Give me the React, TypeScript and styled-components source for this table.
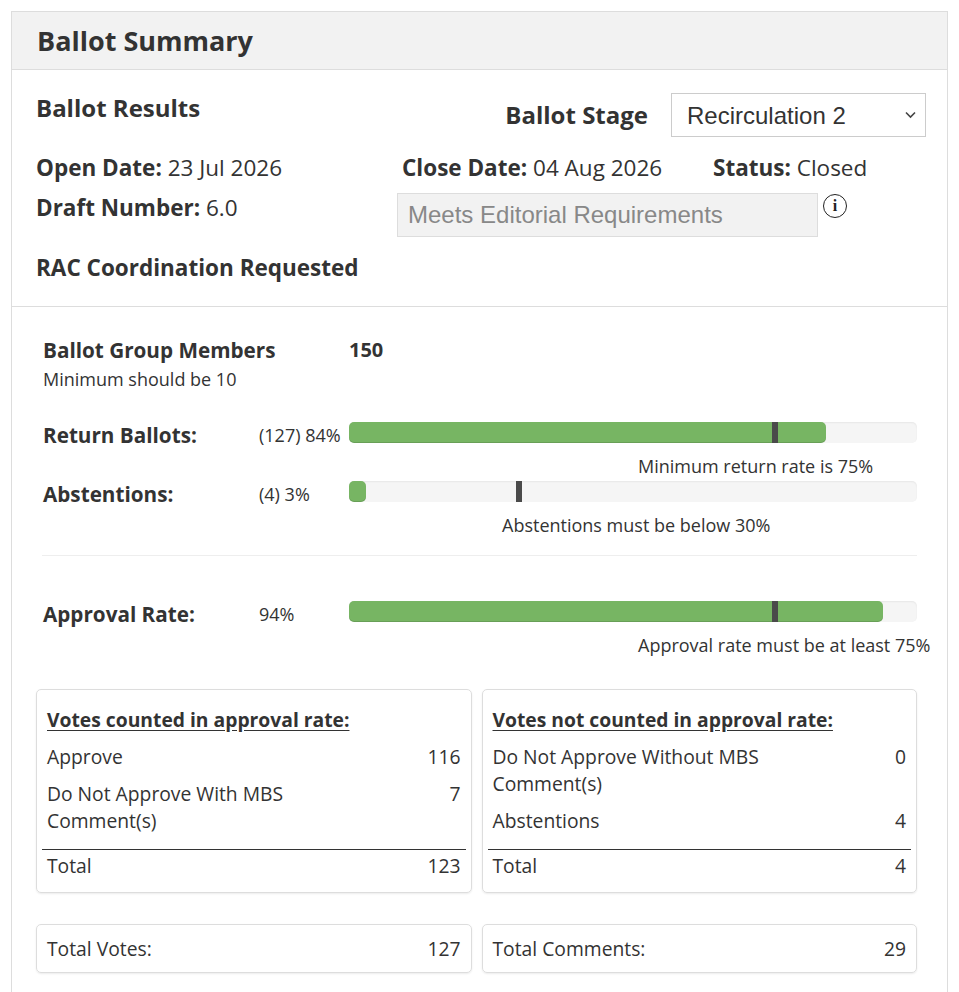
import React from 'react';
import styled, { createGlobalStyle } from 'styled-components';

const GlobalStyle = createGlobalStyle`
  * { box-sizing: border-box; }
  body {
    margin: 0;
    background: #fff;
    font-family: 'Open Sans', 'Noto Sans', sans-serif;
    color: #333;
  }
`;

const Page = styled.div`
  padding: 11px 0 0 11px;
`;

const Panel = styled.div`
  width: 937px;
  border: 1px solid #ddd;
  border-bottom: none;
  background: #fff;
`;

const PanelHeader = styled.div`
  height: 58px;
  background: #f2f2f2;
  border-bottom: 1px solid #ddd;
  display: flex;
  align-items: center;
  padding: 0 0 1px 25px;
`;

const PanelTitle = styled.h2`
  margin: 0;
  font-size: 27px;
  font-weight: 700;
  color: #333;
`;

const ResultsSection = styled.div`
  padding: 23px 21px 24px 24px;
  border-bottom: 1px solid #ddd;
`;

const TopRow = styled.div`
  display: flex;
  justify-content: space-between;
  align-items: flex-start;
`;

const SectionTitle = styled.h3`
  margin: 0;
  font-size: 24px;
  line-height: 30px;
  font-weight: 700;
`;

const StageGroup = styled.div`
  display: flex;
  align-items: center;
  gap: 23px;
`;

const StageLabel = styled.label`
  font-size: 24px;
  font-weight: 700;
  line-height: 30px;
`;

const SelectWrap = styled.div`
  position: relative;
  width: 255px;
  height: 44px;
`;

const Select = styled.select`
  appearance: none;
  width: 100%;
  height: 100%;
  border: 1px solid #ccc;
  border-radius: 0;
  background: #fff;
  padding: 0 30px 0 15px;
  font-family: 'Liberation Sans', Arial, sans-serif;
  font-size: 24px;
  color: #333;
`;

const Chevron = styled.svg`
  position: absolute;
  right: 10px;
  top: 18px;
  pointer-events: none;
`;

const InfoGrid = styled.div<{ $cols: string; $top: number }>`
  display: grid;
  grid-template-columns: ${(p) => p.$cols};
  align-items: start;
  margin-top: ${(p) => p.$top}px;
`;

const Field = styled.div<{ $top?: number }>`
  font-size: 22.5px;
  line-height: 28px;
  margin-top: ${(p) => p.$top ?? 0}px;
  white-space: nowrap;
`;

const FieldLabel = styled.strong`
  font-weight: 700;
`;

const EditorialGroup = styled.div`
  display: flex;
  align-items: flex-start;
  gap: 5px;
`;

const ReadOnlyInput = styled.div`
  width: 421px;
  height: 44px;
  background: #f2f2f2;
  border: 1px solid #ddd;
  padding: 0 10px;
  display: flex;
  align-items: center;
  font-family: 'Liberation Sans', Arial, sans-serif;
  font-size: 24px;
  color: #888;
`;

const InfoIcon = styled.span`
  width: 24px;
  height: 24px;
  margin-top: 1px;
  border: 1.5px solid #222;
  border-radius: 50%;
  display: flex;
  align-items: center;
  justify-content: center;
  font-family: 'Liberation Serif', 'DejaVu Serif', serif;
  font-weight: 700;
  font-size: 16px;
  color: #222;
`;

const StatsSection = styled.div`
  padding: 29px 30px 19px 24px;
`;

const Metrics = styled.div`
  margin-left: 7px;
`;

const MetricGrid = styled.div<{ $top?: number }>`
  display: grid;
  grid-template-columns: 216px 90px minmax(0, 1fr);
  align-items: center;
  margin-top: ${(p) => p.$top ?? 0}px;
`;

const GroupLabel = styled.div`
  grid-column: 1 / 3;
  font-size: 20.7px;
  font-weight: 700;
  line-height: 28px;
`;

const GroupValue = styled.div`
  font-size: 20px;
  font-weight: 700;
  line-height: 28px;
`;

const Hint = styled.div`
  font-size: 18px;
  line-height: 24px;
  margin-top: 3px;
`;

const MetricLabel = styled.div`
  font-size: 20.7px;
  font-weight: 700;
  line-height: 28px;
  position: relative;
  top: 2px;
`;

const MetricValue = styled.div`
  font-size: 18px;
  line-height: 28px;
  position: relative;
  top: 2px;
`;

const Track = styled.div`
  position: relative;
  height: 21px;
  background: #f5f5f5;
  border-radius: 5px;
  box-shadow: inset 0 1px 2px rgba(0, 0, 0, 0.06);
`;

const Fill = styled.div`
  height: 100%;
  background: #77b563;
  border-radius: 5px;
  box-shadow: inset 0 -1px 0 rgba(0, 0, 0, 0.12);
`;

const Marker = styled.div`
  position: absolute;
  top: 0;
  width: 6px;
  height: 100%;
  margin-left: -3px;
  background: #4a4a4a;
`;

const Caption = styled.div<{ $offset: number }>`
  grid-column: 3;
  margin: 7.5px 0 0 ${(p) => p.$offset}px;
  font-size: 18px;
  line-height: 24px;
  white-space: nowrap;
`;

const Divider = styled.hr`
  margin: 18px 0 0 -1px;
  border: none;
  border-top: 1px solid #eee;
`;

const CardGrid = styled.div<{ $top: number }>`
  display: grid;
  grid-template-columns: 1fr 1fr;
  gap: 10px;
  margin-top: ${(p) => p.$top}px;
`;

const Card = styled.div<{ $pad: string }>`
  border: 1px solid #ddd;
  border-radius: 5px;
  box-shadow: 0 1px 2px rgba(0, 0, 0, 0.08);
  padding: ${(p) => p.$pad};
`;

const CardHeading = styled.div`
  font-size: 19.3px;
  font-weight: 700;
  line-height: 26px;
  text-decoration: underline;
  text-underline-offset: 3px;
  margin-bottom: 3.5px;
`;

const VoteRow = styled.div<{ $line?: boolean; $first?: boolean }>`
  display: flex;
  justify-content: space-between;
  gap: 24px;
  font-size: 19.3px;
  line-height: 27px;
  margin-top: ${(p) => (p.$first ? 0 : 10)}px;
  ${(p) =>
    p.$line &&
    `
    margin: 15px -5px 0;
    padding: 2px 5px 0;
    border-top: 1.5px solid #333;
  `}
`;

const VoteName = styled.span`
  max-width: 290px;
`;

interface Bar {
  label: string;
  value: string;
  pct: number;
  marker: number;
  caption: string;
  offset: number;
}

const bars: Bar[] = [
  { label: 'Return Ballots:', value: '(127) 84%', pct: 84, marker: 75, caption: 'Minimum return rate is 75%', offset: 289 },
  { label: 'Abstentions:', value: '(4) 3%', pct: 3, marker: 30, caption: 'Abstentions must be below 30%', offset: 153 },
];

const approval: Bar = {
  label: 'Approval Rate:',
  value: '94%',
  pct: 94,
  marker: 75,
  caption: 'Approval rate must be at least 75%',
  offset: 289,
};

const MetricRow: React.FC<{ bar: Bar; top: number }> = ({ bar, top }) => (
  <MetricGrid $top={top}>
    <MetricLabel>{bar.label}</MetricLabel>
    <MetricValue>{bar.value}</MetricValue>
    <Track>
      <Fill style={{ width: `${bar.pct}%` }} />
      <Marker style={{ left: `${bar.marker}%` }} />
    </Track>
    <Caption $offset={bar.offset}>{bar.caption}</Caption>
  </MetricGrid>
);

const counted = [
  ['Approve', '116'],
  ['Do Not Approve With MBS Comment(s)', '7'],
];

const notCounted = [
  ['Do Not Approve Without MBS Comment(s)', '0'],
  ['Abstentions', '4'],
];

const VoteCard: React.FC<{ title: string; rows: string[][]; total: string }> = ({ title, rows, total }) => (
  <Card $pad="17px 10px 13px">
    <CardHeading>{title}</CardHeading>
    {rows.map(([name, count]) => (
      <VoteRow key={name}>
        <VoteName>{name}</VoteName>
        <span>{count}</span>
      </VoteRow>
    ))}
    <VoteRow $line>
      <span>Total</span>
      <span>{total}</span>
    </VoteRow>
  </Card>
);

export default function App() {
  return (
    <Page>
      <GlobalStyle />
      <Panel>
        <PanelHeader>
          <PanelTitle>Ballot Summary</PanelTitle>
        </PanelHeader>

        <ResultsSection>
          <TopRow>
            <SectionTitle>Ballot Results</SectionTitle>
            <StageGroup>
              <StageLabel htmlFor="stage">Ballot Stage</StageLabel>
              <SelectWrap>
                <Select id="stage" defaultValue="r2">
                  <option value="r2">Recirculation 2</option>
                </Select>
                <Chevron width="11" height="8" viewBox="0 0 11 8">
                  <path d="M1 1.5l4.5 4.5L10 1.5" fill="none" stroke="#444" strokeWidth="1.6" />
                </Chevron>
              </SelectWrap>
            </StageGroup>
          </TopRow>

          <InfoGrid $cols="366px 311px auto" $top={17}>
            <Field>
              <FieldLabel>Open Date:</FieldLabel> 23 Jul 2026
            </Field>
            <Field>
              <FieldLabel>Close Date:</FieldLabel> 04 Aug 2026
            </Field>
            <Field>
              <FieldLabel>Status:</FieldLabel> Closed
            </Field>
          </InfoGrid>

          <InfoGrid $cols="361px auto" $top={11}>
            <Field $top={1}>
              <FieldLabel>Draft Number:</FieldLabel> 6.0
            </Field>
            <EditorialGroup>
              <ReadOnlyInput>Meets Editorial Requirements</ReadOnlyInput>
              <InfoIcon>i</InfoIcon>
            </EditorialGroup>
          </InfoGrid>

          <Field $top={17}>
            <FieldLabel>RAC Coordination Requested</FieldLabel>
          </Field>
        </ResultsSection>

        <StatsSection>
          <Metrics>
            <MetricGrid>
              <GroupLabel>Ballot Group Members</GroupLabel>
              <GroupValue>150</GroupValue>
            </MetricGrid>
            <Hint>Minimum should be 10</Hint>

            <MetricRow bar={bars[0]} top={27.5} />
            <MetricRow bar={bars[1]} top={-0.5} />

            <Divider />

            <MetricRow bar={approval} top={41.5} />
          </Metrics>

          <CardGrid $top={32}>
            <VoteCard title="Votes counted in approval rate:" rows={counted} total="123" />
            <VoteCard title="Votes not counted in approval rate:" rows={notCounted} total="4" />
          </CardGrid>

          <CardGrid $top={31}>
            <Card $pad="10px">
              <VoteRow $first>
                <span>Total Votes:</span>
                <span>127</span>
              </VoteRow>
            </Card>
            <Card $pad="10px">
              <VoteRow $first>
                <span>Total Comments:</span>
                <span>29</span>
              </VoteRow>
            </Card>
          </CardGrid>
        </StatsSection>
      </Panel>
    </Page>
  );
}
